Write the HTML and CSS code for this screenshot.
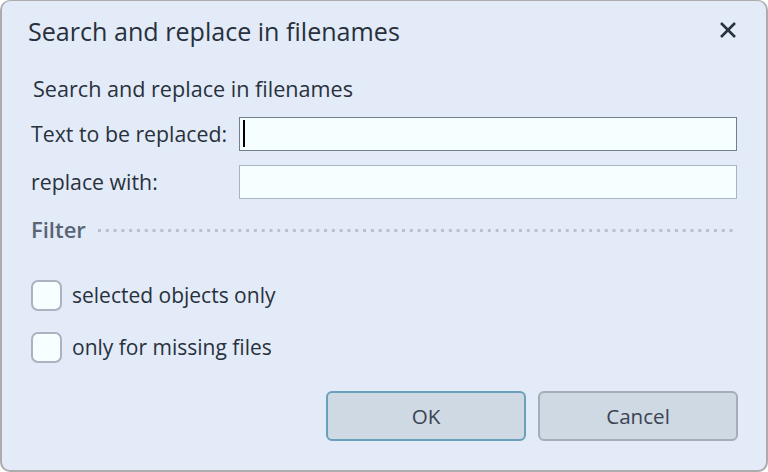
FILE: index.html
```html
<!DOCTYPE html>
<html>
<head>
<meta charset="utf-8">
<link rel="stylesheet" href="styles.css">
</head>
<body>
<div class="window">
  <div class="titlebar">
    <span class="title">Search and replace in filenames</span>
    <span class="close">
      <svg width="18" height="18" viewBox="0 0 18 18"><path d="M2 2 L16 16 M16 2 L2 16" stroke="#28313d" stroke-width="2.6" stroke-linecap="butt" fill="none"/></svg>
    </span>
  </div>
  <div class="content">
    <div class="heading">Search and replace in filenames</div>
    <div class="field-row">
      <label class="field-label">Text to be replaced:</label>
      <div class="textbox focused"><span class="caret"></span></div>
    </div>
    <div class="field-row second">
      <label class="field-label">replace with:</label>
      <div class="textbox"></div>
    </div>
    <div class="group-row">
      <span class="group-label">Filter</span>
      <span class="dots"></span>
    </div>
    <div class="check-row first">
      <span class="checkbox"></span>
      <span class="check-label">selected objects only</span>
    </div>
    <div class="check-row">
      <span class="checkbox"></span>
      <span class="check-label">only for missing files</span>
    </div>
    <div class="buttons">
      <div class="button default">OK</div>
      <div class="button">Cancel</div>
    </div>
  </div>
</div>
</body>
</html>
```

FILE: styles.css
```css
html, body {
  margin: 0;
  padding: 0;
  background: #ffffff;
}
body {
  width: 768px;
  height: 472px;
  overflow: hidden;
  font-family: "Open Sans", "Noto Sans", sans-serif;
  color: #29313d;
}
.window {
  box-sizing: border-box;
  width: 768px;
  height: 472px;
  background: #e2ebf7;
  border: 2px solid #acacac;
  border-top-width: 1px;
  border-radius: 10px;
  display: flex;
  flex-direction: column;
}
.titlebar {
  height: 60px;
  display: flex;
  align-items: center;
  justify-content: space-between;
  padding: 0 29px 0 26px;
}
.title {
  font-size: 25.1px;
  line-height: 30px;
  color: #27303c;
}
.close {
  display: flex;
  width: 18px;
  height: 18px;
  margin-top: -2px;
}
.content {
  display: flex;
  flex-direction: column;
  padding: 0 29px 0 29px;
}
.heading {
  font-size: 21.6px;
  margin-top: 14px;
  margin-left: 2px;
  line-height: 28px;
}
.field-row {
  display: flex;
  align-items: center;
  margin-top: 14px;
}
.field-row.second {
  margin-top: 14px;
}
.field-label {
  width: 208px;
  font-size: 21.3px;
  line-height: 28px;
}
.textbox {
  box-sizing: border-box;
  flex: 1;
  height: 34px;
  background: #f5ffff;
  border: 1px solid #aab4c1;
  position: relative;
}
.textbox.focused {
  border-color: #737e8b;
}
.caret {
  position: absolute;
  left: 3px;
  top: 2px;
  width: 1.5px;
  height: 27px;
  background: #000;
}
.group-row {
  display: flex;
  align-items: center;
  margin-top: 15px;
  height: 30px;
}
.group-label {
  font-size: 22px;
  line-height: 30px;
  font-weight: 600;
  color: #596475;
}
.dots {
  flex: 1;
  height: 3px;
  margin-left: 12px;
  margin-top: 2px;
  background-image: linear-gradient(to right, #b8c1cc 0, #b8c1cc 3px, transparent 3px);
  background-size: 7.8px 3px;
  background-repeat: repeat-x;
}
.check-row {
  display: flex;
  align-items: center;
  margin-left: 0;
  margin-top: 20px;
  height: 32px;
}
.check-row.first {
  margin-top: 35px;
}
.checkbox {
  box-sizing: border-box;
  width: 31px;
  height: 31px;
  border: 2px solid #aab3bf;
  border-radius: 7px;
  background: #f5ffff;
}
.check-label {
  margin-left: 10px;
  font-size: 21px;
  line-height: 28px;
}
.buttons {
  display: flex;
  justify-content: flex-end;
  gap: 12px;
  margin-top: 28px;
  margin-right: -1px;
}
.button {
  box-sizing: border-box;
  width: 200px;
  height: 50px;
  display: flex;
  align-items: center;
  justify-content: center;
  background: #ced9e4;
  border: 2px solid #a6adb6;
  border-radius: 6px;
  font-size: 20.6px;
  color: #3b4452;
}
.button.default {
  border-color: #6aa0b9;
}
```
